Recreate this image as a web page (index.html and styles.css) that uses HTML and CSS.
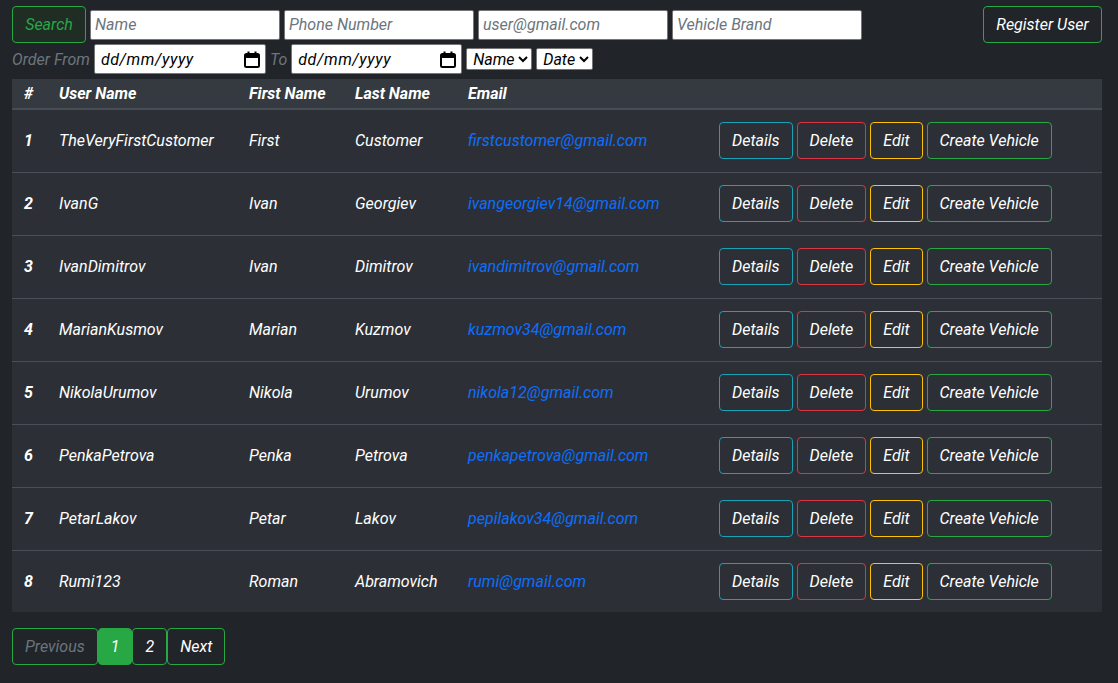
FILE: index.html
```html
<!DOCTYPE html>
<html lang="en">
<head>
<meta charset="utf-8">
<title>Users</title>
<link rel="stylesheet" href="styles.css">
</head>
<body>
<div class="page">
  <div class="filters">
    <div class="filter-row">
      <button class="btn btn-search">Search</button>
      <input class="field" type="text" placeholder="Name">
      <input class="field" type="text" placeholder="Phone Number">
      <input class="field" type="text" placeholder="user@gmail.com">
      <input class="field" type="text" placeholder="Vehicle Brand">
      <button class="btn btn-success register">Register User</button>
    </div>
    <div class="filter-row second">
      <span class="label">Order From</span>
      <label class="date">
        <input class="date-text" type="text" placeholder="dd/mm/yyyy">
        <svg class="cal" width="16" height="17" viewBox="0 0 16 17" aria-hidden="true">
          <rect x="1" y="3" width="14" height="13" rx="1.5" fill="none" stroke="#000" stroke-width="2"/>
          <rect x="1" y="3" width="14" height="4" fill="#000"/>
          <rect x="3.5" y="0.5" width="2" height="4" fill="#000"/>
          <rect x="10.5" y="0.5" width="2" height="4" fill="#000"/>
        </svg>
      </label>
      <span class="label">To</span>
      <label class="date date-to">
        <input class="date-text" type="text" placeholder="dd/mm/yyyy">
        <svg class="cal" width="16" height="17" viewBox="0 0 16 17" aria-hidden="true">
          <rect x="1" y="3" width="14" height="13" rx="1.5" fill="none" stroke="#000" stroke-width="2"/>
          <rect x="1" y="3" width="14" height="4" fill="#000"/>
          <rect x="3.5" y="0.5" width="2" height="4" fill="#000"/>
          <rect x="10.5" y="0.5" width="2" height="4" fill="#000"/>
        </svg>
      </label>
      <select class="sel sel-name"><option>Name</option></select>
      <select class="sel sel-date"><option>Date</option></select>
    </div>
  </div>

  <table class="users">
    <colgroup>
      <col class="c-num"><col class="c-user"><col class="c-first"><col class="c-last"><col class="c-email"><col class="c-actions">
    </colgroup>
    <thead>
      <tr><th>#</th><th>User Name</th><th>First Name</th><th>Last Name</th><th>Email</th><th></th></tr>
    </thead>
    <tbody>
      <tr><th>1</th><td>TheVeryFirstCustomer</td><td>First</td><td>Customer</td><td><a href="#">firstcustomer@gmail.com</a></td>
        <td class="actions"><button class="btn btn-info">Details</button><button class="btn btn-danger">Delete</button><button class="btn btn-warning">Edit</button><button class="btn btn-success">Create Vehicle</button></td></tr>
      <tr><th>2</th><td>IvanG</td><td>Ivan</td><td>Georgiev</td><td><a href="#">ivangeorgiev14@gmail.com</a></td>
        <td class="actions"><button class="btn btn-info">Details</button><button class="btn btn-danger">Delete</button><button class="btn btn-warning">Edit</button><button class="btn btn-success">Create Vehicle</button></td></tr>
      <tr><th>3</th><td>IvanDimitrov</td><td>Ivan</td><td>Dimitrov</td><td><a href="#">ivandimitrov@gmail.com</a></td>
        <td class="actions"><button class="btn btn-info">Details</button><button class="btn btn-danger">Delete</button><button class="btn btn-warning">Edit</button><button class="btn btn-success">Create Vehicle</button></td></tr>
      <tr><th>4</th><td>MarianKusmov</td><td>Marian</td><td>Kuzmov</td><td><a href="#">kuzmov34@gmail.com</a></td>
        <td class="actions"><button class="btn btn-info">Details</button><button class="btn btn-danger">Delete</button><button class="btn btn-warning">Edit</button><button class="btn btn-success">Create Vehicle</button></td></tr>
      <tr><th>5</th><td>NikolaUrumov</td><td>Nikola</td><td>Urumov</td><td><a href="#">nikola12@gmail.com</a></td>
        <td class="actions"><button class="btn btn-info">Details</button><button class="btn btn-danger">Delete</button><button class="btn btn-warning">Edit</button><button class="btn btn-success">Create Vehicle</button></td></tr>
      <tr><th>6</th><td>PenkaPetrova</td><td>Penka</td><td>Petrova</td><td><a href="#">penkapetrova@gmail.com</a></td>
        <td class="actions"><button class="btn btn-info">Details</button><button class="btn btn-danger">Delete</button><button class="btn btn-warning">Edit</button><button class="btn btn-success">Create Vehicle</button></td></tr>
      <tr><th>7</th><td>PetarLakov</td><td>Petar</td><td>Lakov</td><td><a href="#">pepilakov34@gmail.com</a></td>
        <td class="actions"><button class="btn btn-info">Details</button><button class="btn btn-danger">Delete</button><button class="btn btn-warning">Edit</button><button class="btn btn-success">Create Vehicle</button></td></tr>
      <tr><th>8</th><td>Rumi123</td><td>Roman</td><td>Abramovich</td><td><a href="#">rumi@gmail.com</a></td>
        <td class="actions"><button class="btn btn-info">Details</button><button class="btn btn-danger">Delete</button><button class="btn btn-warning">Edit</button><button class="btn btn-success">Create Vehicle</button></td></tr>
    </tbody>
  </table>

  <nav class="pager">
    <button class="btn page disabled">Previous</button>
    <button class="btn page active">1</button>
    <button class="btn page">2</button>
    <button class="btn page">Next</button>
  </nav>
</div>
</body>
</html>
```

FILE: styles.css
```css
* { box-sizing: border-box; }

html, body {
  margin: 0;
  background: #212529;
}

body {
  font-family: Roboto, "Liberation Sans", sans-serif;
  font-style: italic;
  font-size: 16px;
  color: #ffffff;
}

.page {
  padding: 9px 14px 0 14px;
}

.filters {
  display: flex;
  flex-direction: column;
  gap: 1px;
}

.filter-row {
  display: flex;
  align-items: center;
  gap: 4px;
}

.filter-row.second {
  height: 30px;
}

.btn {
  font-family: Roboto, "Liberation Sans", sans-serif;
  font-style: italic;
  font-size: 16px;
  line-height: 23px;
  color: #ffffff;
  background: transparent;
  border: 1px solid #6c757d;
  border-radius: 4px;
  padding: 6px 12px;
  height: 37px;
  cursor: pointer;
  white-space: nowrap;
}

.btn-search {
  color: #28a745;
  border-color: #28a745;
  background: #1f2d25;
  width: 74px;
}

.register {
  margin-left: auto;
  margin-right: 4px;
  width: 119px;
}

.field {
  width: 190px;
  height: 30px;
  border: 1px solid #767676;
  border-radius: 2px;
  padding: 1px 4px;
  font-family: Roboto, "Liberation Sans", sans-serif;
  font-style: italic;
  font-size: 16px;
  background: #ffffff;
  color: #000;
}

.field::placeholder {
  color: #6c757d;
}

.label {
  color: #6c757d;
  white-space: nowrap;
}

.date {
  display: flex;
  align-items: center;
  width: 172px;
  height: 30px;
  border: 1px solid #767676;
  border-radius: 2px;
  padding: 0 5px 0 6px;
  background: #ffffff;
}

.date-to { width: 171px; }

.date-text {
  flex: 1;
  min-width: 0;
  border: 0;
  outline: 0;
  padding: 0;
  background: transparent;
  font-family: Roboto, "Liberation Sans", sans-serif;
  font-style: italic;
  font-size: 16px;
  color: #000;
}

.date-text::placeholder {
  color: #000;
  opacity: 1;
  letter-spacing: 0.6px;
}

.cal {
  flex: none;
  display: block;
}

.sel {
  height: 22px;
  border: 1px solid #767676;
  border-radius: 2px;
  font-family: Roboto, "Liberation Sans", sans-serif;
  font-style: italic;
  font-size: 16px;
  background: #ffffff;
  color: #000;
  padding: 0 0 0 2px;
}

.sel-name { width: 66px; }
.sel-date { width: 57px; }

.users {
  width: 1090px;
  margin-top: 5px;
  border-collapse: collapse;
  background: #2c3036;
  table-layout: fixed;
}

.c-num { width: 35px; }
.c-user { width: 190px; }
.c-first { width: 106px; }
.c-last { width: 113px; }
.c-email { width: 251px; }
.c-actions { width: 395px; }

.users thead th {
  height: 30px;
  padding: 0 12px;
  text-align: left;
  font-weight: 700;
  background: #343a40;
  border-bottom: 2px solid #454d55;
}

.users tbody th,
.users tbody td {
  height: 63px;
  padding: 0 12px;
  text-align: left;
  vertical-align: middle;
  border-bottom: 1px solid #494f56;
  white-space: nowrap;
}

.users tbody tr:last-child th,
.users tbody tr:last-child td {
  border-bottom: none;
  height: 62px;
}

.users tbody th { font-weight: 700; }
.users tbody td { font-weight: 400; }

.users a {
  color: #0d6efd;
  text-decoration: none;
}

.actions .btn + .btn { margin-left: 4px; }

.btn-info { border-color: #17a2b8; }
.btn-danger { border-color: #dc3545; }
.btn-warning { border-color: #ffc107; }
.btn-success { border-color: #28a745; }

.pager {
  display: flex;
  margin-top: 16px;
}

.page {
  border-color: #28a745;
  padding: 6px 12px;
}

.page.disabled { color: #6c757d; }

.page.active {
  background: #28a745;
  color: #ffffff;
}
```
